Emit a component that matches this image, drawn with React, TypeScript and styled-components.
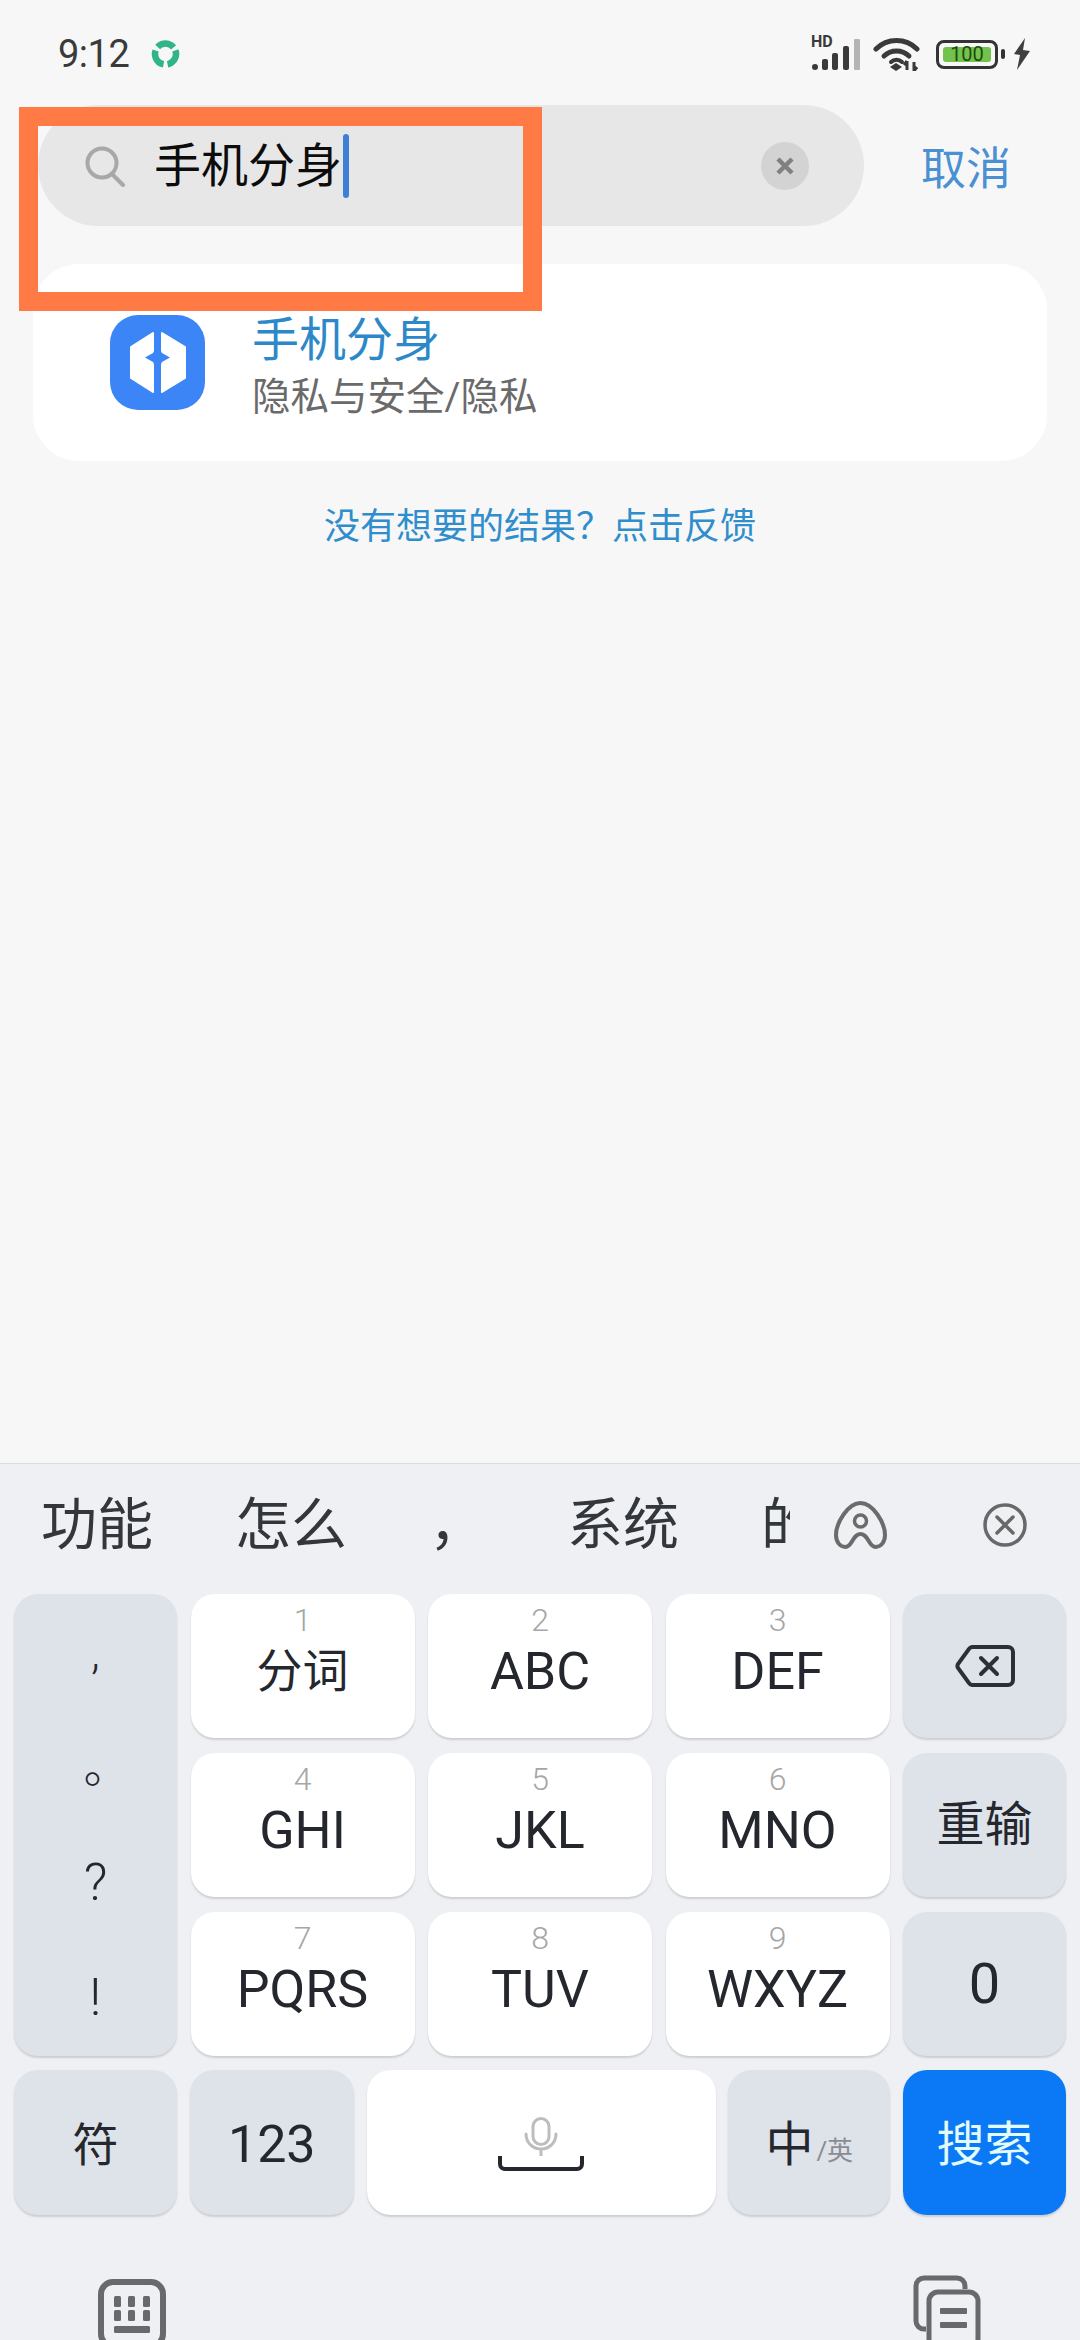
import React from 'react';
import styled, { createGlobalStyle } from 'styled-components';

const GlobalStyle = createGlobalStyle`
  html, body {
    margin: 0;
    padding: 0;
    background: #f7f7f7;
  }
  * {
    box-sizing: border-box;
  }
`;

const FONT = `Roboto, "Noto Sans CJK SC", sans-serif`;

const Screen = styled.div`
  position: relative;
  width: 1080px;
  height: 2340px;
  display: flex;
  flex-direction: column;
  overflow: hidden;
  background: #f7f7f7;
  font-family: ${FONT};
`;

const StatusBar = styled.div`
  flex: none;
  height: 105px;
  padding: 3px 49px 0 58px;
  display: flex;
  align-items: center;
  justify-content: space-between;
`;

const StatusLeft = styled.div`
  display: flex;
  align-items: center;
  gap: 21px;
`;

const Clock = styled.span`
  font-size: 38px;
  color: #3a3a3a;
  letter-spacing: -0.5px;
`;

const StatusRight = styled.div`
  display: flex;
  align-items: center;
`;

const SignalWrap = styled.div`
  position: relative;
  display: flex;
`;

const HdBadge = styled.span`
  position: absolute;
  left: 0;
  top: -4px;
  font-size: 16px;
  line-height: 18px;
  font-weight: 700;
  color: #3a3a3a;
`;

const Battery = styled.div`
  width: 62px;
  height: 29px;
  margin-left: 15px;
  padding: 4px;
  border: 3px solid #343434;
  border-radius: 8px;
  display: flex;
`;

const BatteryFill = styled.div`
  flex: 1;
  background: #72c24c;
  border-radius: 3px;
  color: #1d4a12;
  font-size: 20px;
  line-height: 15px;
  text-align: center;
`;

const BatteryNub = styled.div`
  width: 4px;
  height: 10px;
  margin-left: 3px;
  margin-right: 8px;
  background: #343434;
  border-radius: 2px;
`;

const SearchRow = styled.div`
  flex: none;
  display: flex;
  align-items: center;
  padding-left: 38px;
`;

const SearchPill = styled.div`
  width: 826px;
  height: 121px;
  padding: 0 55px 0 46px;
  display: flex;
  align-items: center;
  background: #e7e7e7;
  border-radius: 61px;
`;

const SearchText = styled.span`
  margin-left: 28px;
  font-size: 47px;
  line-height: 60px;
  color: #0c0c0c;
`;

const Cursor = styled.span`
  width: 6px;
  height: 64px;
  margin-left: 1px;
  background: #3f7fd4;
  border-radius: 3px;
`;

const ClearButton = styled.span`
  width: 48px;
  height: 48px;
  margin-left: auto;
  display: flex;
  align-items: center;
  justify-content: center;
  background: #d3d3d3;
  border-radius: 50%;
`;

const CancelLabel = styled.span`
  margin-left: 57px;
  font-size: 45px;
  color: #4a90d2;
`;

const ResultCard = styled.div`
  flex: none;
  width: 1014px;
  height: 197px;
  margin: 38px 0 0 33px;
  padding-left: 77px;
  display: flex;
  align-items: center;
  gap: 47px;
  background: #fff;
  border-radius: 46px;
`;

const ResultText = styled.div`
  margin-top: 8px;
  display: flex;
  flex-direction: column;
  gap: 2px;
`;

const ResultTitle = styled.span`
  font-size: 47px;
  line-height: 58px;
  color: #2c88c9;
`;

const ResultPath = styled.span`
  font-size: 38.5px;
  line-height: 52px;
  color: #6a6a6a;
`;

const FeedbackLink = styled.div`
  flex: none;
  margin-top: 41px;
  font-size: 36px;
  line-height: 50px;
  text-align: center;
  color: #2f8ecb;
`;

const Highlight = styled.div`
  position: absolute;
  left: 19px;
  top: 107px;
  width: 523px;
  height: 204px;
  border: 19px solid #ff7a45;
`;

const Keyboard = styled.div`
  flex: none;
  height: 877px;
  margin-top: auto;
  display: flex;
  flex-direction: column;
  background: #eef0f4;
  border-top: 1px solid #dcdcdc;
`;

const CandidateBar = styled.div`
  flex: none;
  height: 130px;
  padding-bottom: 8px;
  display: flex;
  align-items: center;
`;

const CandidateList = styled.div`
  width: 790px;
  padding-left: 41px;
  display: flex;
  gap: 82px;
  overflow: hidden;
  white-space: nowrap;
`;

const Candidate = styled.span`
  flex: none;
  font-size: 56px;
  line-height: 70px;
  color: #33363b;
`;

const CandidateIcons = styled.div`
  display: flex;
  align-items: center;
  padding-left: 43px;
  gap: 95px;
`;

const KeyGrid = styled.div`
  flex: none;
  padding: 0 14px;
  display: grid;
  grid-template-columns: 163px repeat(3, 224px) 163px;
  grid-auto-rows: 144px;
  gap: 15px 13.5px;
`;

const Key = styled.div<{ $tone?: 'white' | 'func' | 'primary'; $width?: number }>`
  display: flex;
  align-items: center;
  justify-content: center;
  flex-direction: column;
  ${(p) => (p.$width ? `width: ${p.$width}px; flex: none;` : '')}
  background: ${(p) =>
    p.$tone === 'primary' ? '#0b79f6' : p.$tone === 'func' ? '#dee3e9' : '#fff'};
  color: ${(p) => (p.$tone === 'primary' ? '#e2fbfb' : '#24272d')};
  border-radius: 24px;
  box-shadow: 0 2px 2px rgba(0, 0, 0, 0.14);
`;

const PunctuationKey = styled(Key)`
  grid-row: span 3;
  display: grid;
  grid-template-rows: repeat(4, 1fr);
  justify-items: center;
  align-items: center;
`;

const PunctuationMark = styled.span<{ $size?: number; $shift?: number }>`
  font-size: ${(p) => p.$size ?? 46}px;
  font-weight: 300;
  line-height: 60px;
  margin-left: ${(p) => p.$shift ?? 0}px;
  color: #24272d;
`;

const DigitKey = styled(Key)`
  justify-content: flex-start;
  padding-top: 8px;
`;

const Hint = styled.span`
  font-size: 32px;
  line-height: 36px;
  font-weight: 300;
  color: #a6a6a6;
`;

const Letters = styled.span`
  margin-top: 4px;
  font-size: 52px;
  line-height: 60px;
`;

const HanLabel = styled.span`
  margin-top: 3px;
  font-size: 46px;
  line-height: 60px;
`;

const FuncLabel = styled.span<{ $size?: number }>`
  font-size: ${(p) => p.$size ?? 48}px;
  line-height: 64px;
`;

const BottomKeys = styled.div`
  flex: none;
  margin-top: 14px;
  padding: 0 14px;
  height: 145px;
  display: flex;
  justify-content: space-between;

  & > div {
    padding-top: 4px;
  }
`;

const LangKey = styled(Key)`
  flex-direction: row;
  align-items: center;
`;

const LangMain = styled.span`
  font-size: 48px;
  line-height: 64px;
`;

const LangSub = styled.span`
  margin: 12px 0 0 3px;
  font-size: 26px;
  line-height: 34px;
  color: #8a8d92;
`;

const NavRow = styled.div`
  flex: none;
  margin-top: 60px;
  padding: 0 99px 0 98px;
  display: flex;
  justify-content: space-between;
  align-items: flex-start;
`;

const NavKeyboardSlot = styled.div`
  margin-top: 4px;
`;

const StatusLogo = () => (
  <svg width="31" height="28" viewBox="0 0 31 28" fill="none">
    <circle
      cx="15.500"
      cy="14"
      r="10.500"
      stroke="#2fb586"
      strokeWidth="6.500"
      strokeDasharray="18 4"
      transform="rotate(-20 15.500 14)"
    />
  </svg>
);

const SignalIcon = () => (
  <svg width="50" height="34" viewBox="0 0 50 34" fill="none">
    <rect x="1" y="27" width="6" height="6" rx="3" fill="#3a3a3a" />
    <rect x="11" y="22" width="6" height="11" rx="2" fill="#3a3a3a" />
    <rect x="21" y="16" width="6" height="17" rx="2" fill="#3a3a3a" />
    <rect x="32" y="9" width="6" height="24" rx="2" fill="#3a3a3a" />
    <rect x="43" y="2" width="6" height="31" rx="1" fill="#b4b4b4" />
  </svg>
);

const WifiIcon = () => (
  <svg width="48" height="34" viewBox="0 0 48 34" fill="none" style={{ marginLeft: 12 }}>
    <path d="M3 12a29 29 0 0 1 41 0" stroke="#3a3a3a" strokeWidth="5" strokeLinecap="round" />
    <path d="M11 19a18 18 0 0 1 25 0" stroke="#3a3a3a" strokeWidth="5" strokeLinecap="round" />
    <path d="M18 25a8 8 0 0 1 11 0" stroke="#3a3a3a" strokeWidth="4" strokeLinecap="round" />
    <path d="M17 30l6-4 6 4-6 4z" fill="#3a3a3a" />
    <path d="M34 33v-9M34 24l-3 4M41 25v9M41 34l3-4" stroke="#3a3a3a" strokeWidth="3" />
  </svg>
);

const BoltIcon = () => (
  <svg width="18" height="32" viewBox="0 0 18 32">
    <path d="M12 0 1 16l6 1-3 15 13-19-7-1z" fill="#3f3f3f" />
  </svg>
);

const SearchIcon = () => (
  <svg width="42" height="42" viewBox="0 0 42 42" fill="none">
    <circle cx="18" cy="18" r="14.5" stroke="#a8a8a8" strokeWidth="4" />
    <path d="M28 29l11 11" stroke="#a8a8a8" strokeWidth="4" strokeLinecap="round" />
  </svg>
);

const ClearIcon = () => (
  <svg width="20" height="20" viewBox="0 0 20 20" fill="none">
    <path d="M3 3l14 14M17 3 3 17" stroke="#808080" strokeWidth="4.5" />
  </svg>
);

const CloneAppIcon = () => (
  <svg width="95" height="95" viewBox="0 0 95 95" style={{ flex: 'none' }}>
    <rect width="95" height="95" rx="28" fill="#3c85f6" />
    <path d="M43 18 21 32v31l22 14z" fill="#fff" stroke="#fff" strokeWidth="2" strokeLinejoin="round" />
    <path d="M52 18 75 32v31L52 77z" fill="#fff" stroke="#fff" strokeWidth="2" strokeLinejoin="round" />
    <path d="M47.5 29 52 38l8 4.500-8 4.500-4.500 9-4.500-9-8-4.500 8-4.500z" fill="#3c85f6" />
  </svg>
);

const ArchIcon = () => (
  <svg width="55" height="48" viewBox="0 0 55 48" fill="none">
    <path
      d="M27.500 2C15 2 3 22 3 34c0 7 4 12 9.500 12 7 0 7-13 15-13s8 13 15 13c5.500 0 9.500-5 9.500-12C52 22 40 2 27.500 2z"
      stroke="#6b6b6b"
      strokeWidth="4"
    />
    <circle cx="27.500" cy="20" r="6" stroke="#6b6b6b" strokeWidth="3.500" />
  </svg>
);

const CircleCloseIcon = () => (
  <svg width="44" height="44" viewBox="0 0 44 44" fill="none">
    <circle cx="22" cy="22" r="20" stroke="#686868" strokeWidth="3.500" />
    <path d="M14 14l16 16M30 14 14 30" stroke="#686868" strokeWidth="3.500" strokeLinecap="round" />
  </svg>
);

const BackspaceIcon = () => (
  <svg width="60" height="42" viewBox="0 0 60 42" fill="none">
    <path
      d="M17 2h36a5 5 0 0 1 5 5v28a5 5 0 0 1-5 5H17a4 4 0 0 1-3-2L3 23a4 4 0 0 1 0-4L14 4a4 4 0 0 1 3-2z"
      stroke="#2b2f38"
      strokeWidth="4"
    />
    <path d="M26 13l16 16M42 13 26 29" stroke="#2b2f38" strokeWidth="4" strokeLinecap="round" />
  </svg>
);

const MicIcon = () => (
  <svg width="34" height="39" viewBox="0 0 34 39" fill="none">
    <rect x="9" y="1.500" width="16" height="26" rx="8" stroke="#bdbdbd" strokeWidth="3" />
    <path d="M2 17c0 9 7 15 15 15s15-6 15-15M17 32v7" stroke="#bdbdbd" strokeWidth="3" strokeLinecap="round" />
  </svg>
);

const SpaceIcon = () => (
  <svg width="86" height="16" viewBox="0 0 86 16" fill="none">
    <path d="M2 0v8a5 5 0 0 0 5 5h72a5 5 0 0 0 5-5V0" stroke="#24272d" strokeWidth="4" />
  </svg>
);

const KeyboardIcon = () => (
  <svg width="68" height="70" viewBox="0 0 68 70" fill="none">
    <rect x="3" y="3" width="62" height="64" rx="12" stroke="#67696d" strokeWidth="6" />
    <g fill="#67696d">
      <rect x="16" y="17" width="7" height="11" rx="1.500" />
      <rect x="30" y="17" width="7" height="11" rx="1.500" />
      <rect x="45" y="17" width="7" height="11" rx="1.500" />
      <rect x="16" y="31" width="7" height="11" rx="1.500" />
      <rect x="30" y="31" width="7" height="11" rx="1.500" />
      <rect x="45" y="31" width="7" height="11" rx="1.500" />
      <rect x="16" y="47" width="36" height="7" rx="1.500" />
    </g>
  </svg>
);

const CopyIcon = () => (
  <svg width="68" height="74" viewBox="0 0 68 74" fill="none">
    <path d="M13 54H11a8 8 0 0 1-8-8V11a8 8 0 0 1 8-8h33a8 8 0 0 1 8 8v3" stroke="#67696d" strokeWidth="5" />
    <rect x="16" y="17" width="49" height="56" rx="9" stroke="#67696d" strokeWidth="5" fill="#eef0f4" />
    <rect x="27" y="33" width="27" height="6" rx="1" fill="#67696d" />
    <rect x="27" y="47" width="27" height="6" rx="1" fill="#67696d" />
  </svg>
);

const letterKeys = [
  [
    { hint: '1', label: '分词', han: true },
    { hint: '2', label: 'ABC' },
    { hint: '3', label: 'DEF' },
  ],
  [
    { hint: '4', label: 'GHI' },
    { hint: '5', label: 'JKL' },
    { hint: '6', label: 'MNO' },
  ],
  [
    { hint: '7', label: 'PQRS' },
    { hint: '8', label: 'TUV' },
    { hint: '9', label: 'WXYZ' },
  ],
];

const candidates = ['功能', '怎么', '，', '系统', '的'];

const renderDigitKey = (k: { hint: string; label: string; han?: boolean }) => (
  <DigitKey key={k.hint}>
    <Hint>{k.hint}</Hint>
    {k.han ? <HanLabel>{k.label}</HanLabel> : <Letters>{k.label}</Letters>}
  </DigitKey>
);

export default function App() {
  return (
    <Screen>
      <GlobalStyle />
      <StatusBar>
        <StatusLeft>
          <Clock>9:12</Clock>
          <StatusLogo />
        </StatusLeft>
        <StatusRight>
          <SignalWrap>
            <HdBadge>HD</HdBadge>
            <SignalIcon />
          </SignalWrap>
          <WifiIcon />
          <Battery>
            <BatteryFill>100</BatteryFill>
          </Battery>
          <BatteryNub />
          <BoltIcon />
        </StatusRight>
      </StatusBar>

      <SearchRow>
        <SearchPill>
          <SearchIcon />
          <SearchText>手机分身</SearchText>
          <Cursor />
          <ClearButton>
            <ClearIcon />
          </ClearButton>
        </SearchPill>
        <CancelLabel>取消</CancelLabel>
      </SearchRow>

      <ResultCard>
        <CloneAppIcon />
        <ResultText>
          <ResultTitle>手机分身</ResultTitle>
          <ResultPath>隐私与安全/隐私</ResultPath>
        </ResultText>
      </ResultCard>

      <FeedbackLink>没有想要的结果？点击反馈</FeedbackLink>

      <Highlight />

      <Keyboard>
        <CandidateBar>
          <CandidateList>
            {candidates.map((c) => (
              <Candidate key={c}>{c}</Candidate>
            ))}
          </CandidateList>
          <CandidateIcons>
            <ArchIcon />
            <CircleCloseIcon />
          </CandidateIcons>
        </CandidateBar>

        <KeyGrid>
          <PunctuationKey $tone="func">
            <PunctuationMark>,</PunctuationMark>
            <PunctuationMark $shift={22}>。</PunctuationMark>
            <PunctuationMark $size={52}>?</PunctuationMark>
            <PunctuationMark $size={52}>!</PunctuationMark>
          </PunctuationKey>
          {letterKeys[0].map(renderDigitKey)}
          <Key $tone="func">
            <BackspaceIcon />
          </Key>
          {letterKeys[1].map(renderDigitKey)}
          <Key $tone="func">
            <FuncLabel>重输</FuncLabel>
          </Key>
          {letterKeys[2].map(renderDigitKey)}
          <Key $tone="func">
            <FuncLabel $size={56}>0</FuncLabel>
          </Key>
        </KeyGrid>

        <BottomKeys>
          <Key $tone="func" $width={163}>
            <FuncLabel $size={46}>符</FuncLabel>
          </Key>
          <Key $tone="func" $width={164}>
            <FuncLabel $size={52}>123</FuncLabel>
          </Key>
          <Key $width={349}>
            <MicIcon />
            <SpaceIcon />
          </Key>
          <LangKey $tone="func" $width={162}>
            <LangMain>中</LangMain>
            <LangSub>/英</LangSub>
          </LangKey>
          <Key $tone="primary" $width={163}>
            <FuncLabel>搜索</FuncLabel>
          </Key>
        </BottomKeys>

        <NavRow>
          <NavKeyboardSlot>
            <KeyboardIcon />
          </NavKeyboardSlot>
          <CopyIcon />
        </NavRow>
      </Keyboard>
    </Screen>
  );
}
